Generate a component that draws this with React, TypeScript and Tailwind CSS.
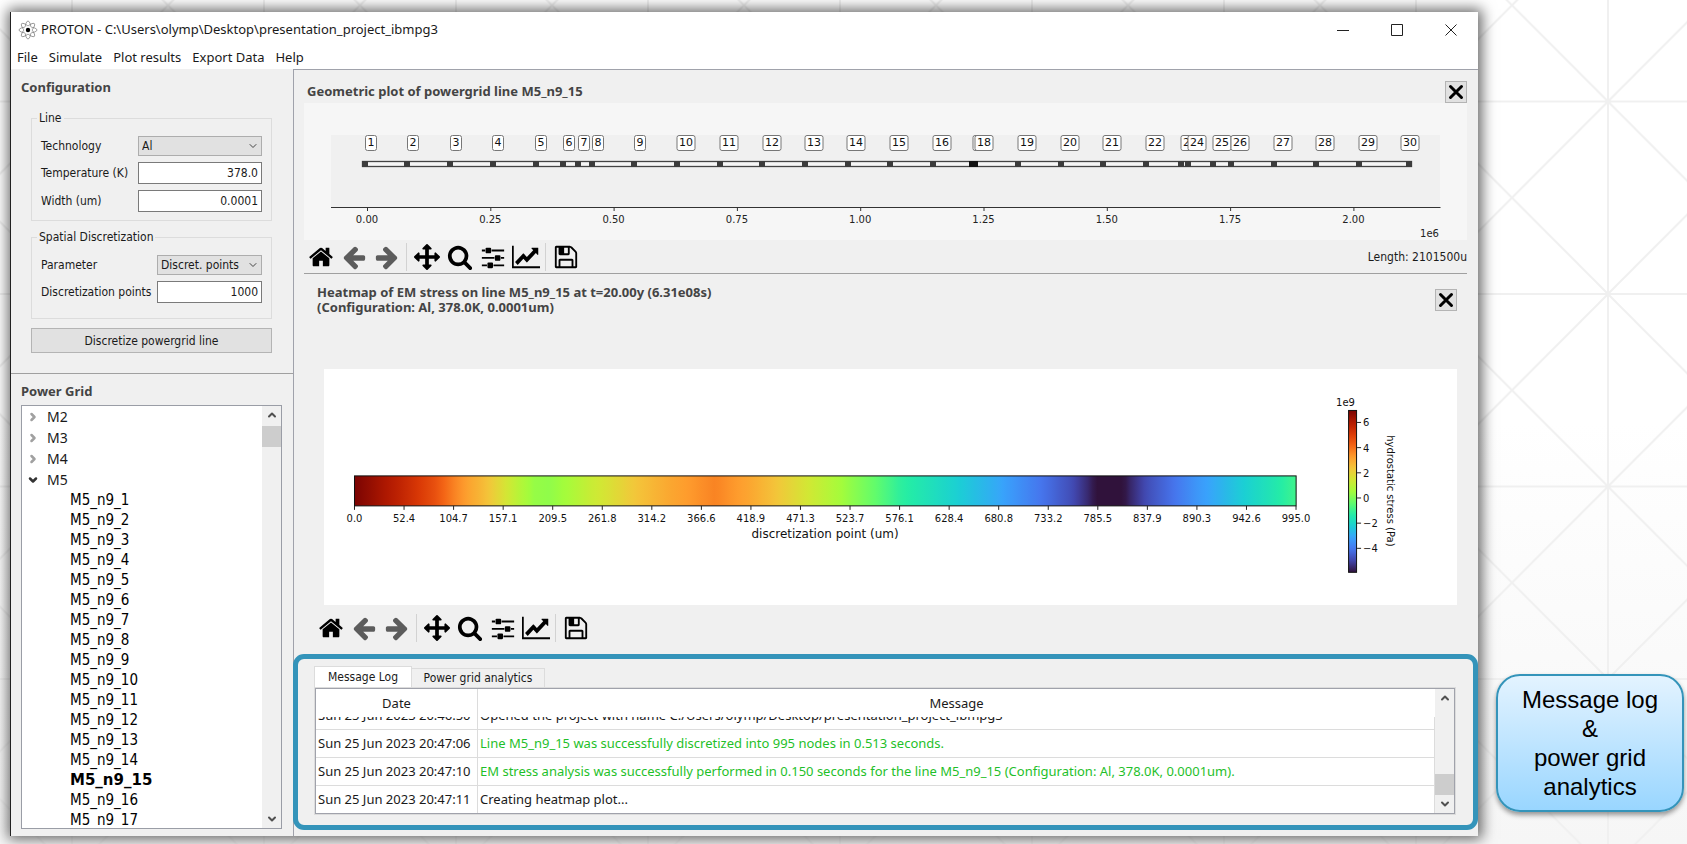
import React from "react";
import { ChevronDown, ChevronRight, ChevronUp } from "lucide-react";

const UI = "font-['Noto_Sans',sans-serif]";
const TAHOMA = "font-['DejaVu_Sans_Condensed','DejaVu_Sans',sans-serif]";
const HEADING = "font-['Noto_Sans',sans-serif] text-[13px] font-bold text-[#444]";

/* ---------- toolbar icons ---------- */

const ICONS = {
  home: "M1472 992v480q0 26-19 45t-45 19h-384v-384h-256v384h-384q-26 0-45-19t-19-45v-480q0-1 .5-3t.5-3l575-474 575 474q1 2 1 6zm223-69l-62 74q-8 9-21 11h-3q-13 0-21-7l-692-577-692 577q-12 8-24 7-13-2-21-11l-62-74q-8-10-7-23.5t11-21.5l719-599q32-26 76-26t76 26l244 204v-195q0-14 9-23t23-9h192q14 0 23 9t9 23v408l219 182q10 8 11 21.5t-7 23.5z",
  back: "M1664 896v128q0 53-32.5 90.500t-84.5 37.500h-704l293 294q38 36 38 90t-38 90l-75 76q-37 37-90 37-52 0-91-37l-651-652q-37-37-37-90 0-52 37-91l651-650q38-38 91-38 52 0 90 38l75 74q38 38 38 91t-38 91l-293 293h704q52 0 84.500 37.500t32.500 90.500z",
  pan: "M1792 896q0 26-19 45l-256 256q-19 19-45 19t-45-19-19-45v-128h-384v384h128q26 0 45 19t19 45-19 45l-256 256q-19 19-45 19t-45-19l-256-256q-19-19-19-45t19-45 45-19h128v-384h-384v128q0 26-19 45t-45 19-45-19l-256-256q-19-19-19-45t19-45l256-256q19-19 45-19t45 19 19 45v128h384v-384h-128q-26 0-45-19t-19-45 19-45l256-256q19-19 45-19t45 19l256 256q19 19 19 45t-19 45-45 19h-128v384h384v-128q0-26 19-45t45-19 45 19l256 256q19 19 19 45z",
  zoom: "M1216 832q0-185-131.500-316.500t-316.500-131.500-316.500 131.500-131.500 316.500 131.500 316.500 316.500 131.500 316.500-131.500 131.500-316.500zm512 832q0 52-38 90t-90 38q-54 0-90-38l-343-342q-179 124-399 124-143 0-273.500-55.500t-225-150-150-225-55.500-273.500 55.500-273.500 150-225 225-150 273.500-55.500 273.500 55.500 225 150 150 225 55.500 273.500q0 220-124 399l343 343q37 37 37 90z",
  sliders:
    "M352 1408v128h-352v-128h352zm352-128q26 0 45 19t19 45v256q0 26-19 45t-45 19h-256q-26 0-45-19t-19-45v-256q0-26 19-45t45-19h256zm160-384v128h-864v-128h864zm-640-512v128h-224v-128h224zm1312 1024v128h-736v-128h736zm-960-1152q26 0 45 19t19 45v256q0 26-19 45t-45 19h-256q-26 0-45-19t-19-45v-256q0-26 19-45t45-19h256zm640 512q26 0 45 19t19 45v256q0 26-19 45t-45 19h-256q-26 0-45-19t-19-45v-256q0-26 19-45t45-19h256zm320 128v128h-224v-128h224zm0-512v128h-864v-128h864z",
  chart:
    "M2048 1536v128h-2048v-1536h128v1408h1920zm-128-1248v435q0 21-19.500 29.500t-35.500-7.500l-121-121-633 633q-10 10-23 10t-23-10l-233-233-416 416-192-192 585-585q10-10 23-10t23 10l233 233 464-464-121-121q-16-16-7.500-35.500t29.500-19.500h435q14 0 23 9t9 23z",
  save: "M512 1536h768v-384h-768v384zm896 0h128v-896q0-14-10-38.500t-20-34.500l-281-281q-10-10-34-20t-39-10v416q0 40-28 68t-68 28h-576q-40 0-68-28t-28-68v-416h-128v1280h128v-416q0-40 28-68t68-28h832q40 0 68 28t28 68v416zm-384-928v-320q0-13-9.500-22.500t-22.500-9.500h-192q-13 0-22.500 9.500t-9.500 22.500v320q0 13 9.500 22.500t22.500 9.500h192q13 0 22.500-9.500t9.500-22.500zm640 32v928q0 40-28 68t-68 28h-1344q-40 0-68-28t-28-68v-1344q0-40 28-68t68-28h928q40 0 88 20t76 48l280 280q28 28 48 76t20 88z",
};

function ToolButton({
  label,
  path,
  viewBox = "0 0 1792 1792",
  className = "w-[26px] text-black",
}: {
  label: string;
  path: string;
  viewBox?: string;
  className?: string;
}) {
  return (
    <button type="button" aria-label={label} className="flex h-[33px] w-[33px] items-center justify-center">
      <svg viewBox={viewBox} preserveAspectRatio="none" className={`h-[26px] shrink-0 fill-current ${className}`}>
        <path d={path} />
      </svg>
    </button>
  );
}

function Separator() {
  return <div className="mx-[3px] h-7 w-px bg-[#d2d2d2]" />;
}

function PlotToolbar() {
  return (
    <div className="flex items-center">
      <ToolButton label="Home" path={ICONS.home} />
      <ToolButton label="Back" path={ICONS.back} className="w-[26px] text-[#5c5c5c]" />
      <ToolButton label="Forward" path={ICONS.back} className="w-[26px] -scale-x-100 text-[#5c5c5c]" />
      <Separator />
      <ToolButton label="Pan" path={ICONS.pan} />
      <ToolButton label="Zoom" path={ICONS.zoom} />
      <ToolButton label="Configure subplots" path={ICONS.sliders} viewBox="-128 0 1792 1792" />
      <ToolButton label="Edit axis" path={ICONS.chart} viewBox="0 0 2048 1792" className="w-7 text-black" />
      <Separator />
      <ToolButton label="Save" path={ICONS.save} />
    </div>
  );
}

function CloseButton({ label }: { label: string }) {
  return (
    <button
      type="button"
      aria-label={label}
      className="flex size-[22px] shrink-0 items-center justify-center border border-[#b4b4b4] bg-[#e1e1e1]"
    >
      <svg viewBox="0 0 16 16" className="size-4 stroke-black stroke-[3] [stroke-linecap:round]">
        <path d="M2.500 2.500 13.500 13.500M13.500 2.500 2.500 13.500" />
      </svg>
    </button>
  );
}

/* ---------- geometric plot ---------- */

const NODES = [
  [61, 67], [103, 109], [146, 152], [189, 194], [232, 237], [259, 265], [274, 280], [288, 294],
  [330, 336], [373, 382], [416, 425], [458, 468], [501, 510], [544, 552], [586, 595], [629, 638],
  [668, 678], [671, 680], [714, 723], [757, 766], [799, 808], [842, 851], [877, 886], [884, 893],
  [909, 918], [927, 936], [970, 979], [1012, 1021], [1055, 1064], [1105, 1106],
];
const GEO_TICKS = ["0.00", "0.25", "0.50", "0.75", "1.00", "1.25", "1.50", "1.75", "2.00"];

function GeometricPlot() {
  return (
    <svg
      viewBox="0 0 1163 137"
      role="img"
      aria-label="Geometric plot"
      className="block h-auto w-full bg-[#f6f6f6] font-['DejaVu_Sans',sans-serif] text-[10px]"
    >
      <rect x="27" y="32" width="1109" height="72" fill="#f0f0f0" />
      <path d="M27 104.500H1136.500" stroke="#333" strokeWidth="1" />
      <rect x="58.500" y="58.500" width="1049" height="5" fill="#f6f6f6" stroke="#444" strokeWidth="1.300" />
      {NODES.map(([x], i) => (
        <rect key={i} x={x - 3} y="58" width="6" height="6" fill={i === 16 || i === 17 ? "#111" : "#3c3c3c"} />
      ))}
      {NODES.map(([, c], i) => {
        const w = i < 9 ? 11 : 18;
        return (
          <g key={i}>
            <rect x={c - w / 2} y="32.500" width={w} height="15" rx="2" fill="#fff" stroke="#777" />
            <text x={c} y="43" textAnchor="middle" fill="#111" className="text-[11px]">
              {i + 1}
            </text>
          </g>
        );
      })}
      {GEO_TICKS.map((t, i) => (
        <g key={t}>
          <path d={`M${63.5 + i * 123.3} 104v4`} stroke="#333" />
          <text x={63 + i * 123.3} y="120" textAnchor="middle" fill="#222">
            {t}
          </text>
        </g>
      ))}
      <text x="1135" y="134" textAnchor="end" fill="#222">
        1e6
      </text>
    </svg>
  );
}

/* ---------- heatmap ---------- */

const TURBO = [
  [48, 18, 59], [65, 69, 171], [70, 117, 237], [57, 162, 252], [27, 207, 212], [36, 236, 166], [97, 252, 108],
  [164, 252, 59], [209, 232, 52], [243, 198, 58], [254, 155, 45], [243, 99, 21], [217, 56, 6], [177, 25, 1],
  [122, 4, 2],
];

function turbo(t: number) {
  const pos = t * (TURBO.length - 1);
  const i = Math.min(TURBO.length - 2, Math.floor(pos));
  const rgb = TURBO[i].map((c, k) => Math.round(c + (TURBO[i + 1][k] - c) * (pos - i)));
  return `rgb(${rgb.join(",")})`;
}

const STRESS: [number, number][] = [
  [0, 1], [52, 0.895], [84, 0.82], [104, 0.75], [121, 0.7], [137, 0.66], [154, 0.6], [172, 0.535],
  [189, 0.485], [206, 0.478], [225, 0.505], [249, 0.555], [270, 0.59], [298, 0.645], [330, 0.69], [381, 0.745],
  [418, 0.695], [443, 0.65], [471, 0.59], [500, 0.53], [524, 0.48], [550, 0.43], [576, 0.37], [628, 0.3],
  [680, 0.225], [705, 0.18], [733, 0.13], [757, 0.085], [776, 0.03], [783, 0], [813, 0], [820, 0.03],
  [838, 0.085], [865, 0.14], [890, 0.195], [915, 0.24], [942, 0.29], [970, 0.34], [995, 0.39],
];
const HEAT_TICKS = [
  "0.0", "52.4", "104.7", "157.1", "209.5", "261.8", "314.2", "366.6", "418.9", "471.3",
  "523.7", "576.1", "628.4", "680.8", "733.2", "785.5", "837.9", "890.3", "942.6", "995.0",
];
const BAR_TICKS = ["6", "4", "2", "0", "−2", "−4"];

function stressAt(x: number) {
  for (let i = 1; i < STRESS.length; i++) {
    const [x1, t1] = STRESS[i];
    if (x <= x1) {
      const [x0, t0] = STRESS[i - 1];
      return t0 + ((t1 - t0) * (x - x0)) / (x1 - x0);
    }
  }
  return STRESS[STRESS.length - 1][1];
}

function HeatmapPlot() {
  const heat = Array.from({ length: 200 }, (_, i) => i / 199);
  const scale = Array.from({ length: 41 }, (_, i) => i / 40);
  return (
    <svg
      viewBox="0 0 1134 236"
      role="img"
      aria-label="Heatmap of EM stress"
      className="block h-auto w-full bg-white font-['DejaVu_Sans',sans-serif] text-[10px]"
    >
      <defs>
        <linearGradient id="heat">
          {heat.map((p) => (
            <stop key={p} offset={p} stopColor={turbo(stressAt(p * 995))} />
          ))}
        </linearGradient>
        <linearGradient id="scale" x1="0" y1="1" x2="0" y2="0">
          {scale.map((p) => (
            <stop key={p} offset={p} stopColor={turbo(p)} />
          ))}
        </linearGradient>
      </defs>
      <rect x="30.500" y="107" width="942.500" height="30" fill="url(#heat)" stroke="#111" />
      {HEAT_TICKS.map((t, i) => (
        <g key={t}>
          <path d={`M${30.5 + i * 49.6} 137v4`} stroke="#222" />
          <text x={30.5 + i * 49.6} y="153.500" textAnchor="middle" fill="#111">
            {t}
          </text>
        </g>
      ))}
      <text x="501.500" y="169" textAnchor="middle" fill="#111" className="text-[12px]">
        discretization point (um)
      </text>
      <rect x="1025.500" y="41.500" width="8" height="162" fill="url(#scale)" stroke="#111" />
      <text x="1013" y="37.500" fill="#111">
        1e9
      </text>
      {BAR_TICKS.map((t, i) => (
        <g key={t}>
          <path d={`M1034 ${53.5 + i * 25.2}h4`} stroke="#222" />
          <text x="1040" y={57.5 + i * 25.2} fill="#111">
            {t}
          </text>
        </g>
      ))}
      <text transform="translate(1064 122) rotate(90)" textAnchor="middle" fill="#111">
        hydrostatic stress (Pa)
      </text>
    </svg>
  );
}

/* ---------- left side ---------- */

function Combo({ id, value, width }: { id: string; value: string; width: string }) {
  return (
    <div className={`relative ${width}`}>
      <select
        id={id}
        defaultValue={value}
        className="block h-5 w-full appearance-none border border-[#adadad] bg-[#e1e1e1] pl-[3px] leading-[18px] text-[#1a1a1a]"
      >
        <option>{value}</option>
      </select>
      <ChevronDown className="pointer-events-none absolute top-1 right-[3px] size-3 text-[#444]" strokeWidth={2} />
    </div>
  );
}

function Field({ id, label, children }: { id: string; label: string; children: React.ReactNode }) {
  return (
    <div className="flex items-center justify-between">
      <label htmlFor={id} className="whitespace-nowrap">
        {label}
      </label>
      {children}
    </div>
  );
}

const inputClass = "block h-[22px] border border-[#7a7a7a] bg-white pr-[3px] text-right text-[#1a1a1a]";

function Configuration() {
  return (
    <section
      className={`border-b border-[#a0a0a0] pt-[9px] pr-[11px] pb-5 pl-[10px] text-[12px] text-[#1a1a1a] ${TAHOMA}`}
    >
      <h2 className={`leading-[18px] ${HEADING}`}>Configuration</h2>
      <div className="px-[10px] pt-[13px]">
        <fieldset className="border border-[#dcdcdc] px-[9px] pb-2">
          <legend className="-ml-1 px-[2px] leading-[18px]">Line</legend>
          <div className="flex flex-col gap-[6px] pt-[9px]">
            <Field id="tech" label="Technology">
              <Combo id="tech" value="Al" width="w-[124px]" />
            </Field>
            <Field id="temp" label="Temperature (K)">
              <input id="temp" defaultValue="378.0" className={`w-[124px] ${inputClass}`} />
            </Field>
            <Field id="width" label="Width (um)">
              <input id="width" defaultValue="0.0001" className={`w-[124px] ${inputClass}`} />
            </Field>
          </div>
        </fieldset>
        <fieldset className="mt-[7px] border border-[#dcdcdc] px-[9px] pb-[15px]">
          <legend className="-ml-1 px-[2px] leading-[18px]">Spatial Discretization</legend>
          <div className="flex flex-col gap-[6px] pt-[9px]">
            <Field id="param" label="Parameter">
              <Combo id="param" value="Discret. points" width="w-[105px]" />
            </Field>
            <Field id="points" label="Discretization points">
              <input id="points" defaultValue="1000" className={`w-[105px] ${inputClass}`} />
            </Field>
          </div>
        </fieldset>
        <button type="button" className="mt-[9px] block h-[25px] w-full border border-[#b4b4b4] bg-[#e1e1e1]">
          Discretize powergrid line
        </button>
      </div>
    </section>
  );
}

function ScrollBar({ thumb }: { thumb: string }) {
  return (
    <div className="flex w-[19px] shrink-0 flex-col items-center bg-[#f0f0f0]">
      <ChevronUp className="my-[3px] size-3 shrink-0 text-[#505050]" strokeWidth={4} />
      <div className={`flex w-full flex-1 flex-col ${thumb}`}>
        <div className="h-[21px] bg-[#cdcdcd]" />
      </div>
      <ChevronDown className="my-[3px] size-3 shrink-0 text-[#505050]" strokeWidth={4} />
    </div>
  );
}

const LAYERS = ["M2", "M3", "M4", "M5"];
const LINES = Array.from({ length: 17 }, (_, i) => i + 1);

function PowerGrid() {
  return (
    <section className="pt-2 pr-[11px] pb-[7px] pl-[10px]">
      <h2 className={`leading-[18px] ${HEADING}`}>Power Grid</h2>
      <div className="mt-[5px] flex h-[424px] overflow-hidden border border-[#9a9da6] bg-white">
        <ul className="min-w-0 flex-1 text-[#1a1a1a]">
          {LAYERS.map((name) => (
            <li key={name}>
              <div className={`flex h-[21px] items-center text-[14px] ${UI}`}>
                {name === "M5" ? (
                  <ChevronDown className="mr-2 ml-[5px] size-3 text-[#333]" strokeWidth={5} />
                ) : (
                  <ChevronRight className="mr-2 ml-[5px] size-3 text-[#a0a0a0]" strokeWidth={5} />
                )}
                {name}
              </div>
              {name === "M5" && (
                <ul className={`pl-12 text-[15px] leading-5 text-black ${TAHOMA}`}>
                  {LINES.map((n) => (
                    <li key={n} className={n === 15 ? "font-['DejaVu_Sans',sans-serif] font-bold" : ""}>
                      M5_n9_{n}
                    </li>
                  ))}
                </ul>
              )}
            </li>
          ))}
        </ul>
        <ScrollBar thumb="pt-0.5" />
      </div>
    </section>
  );
}

/* ---------- message log ---------- */

const MESSAGES = [
  ["Sun 25 Jun 2023 20:46:50", "Opened the project with name C:/Users/olymp/Desktop/presentation_project_ibmpg3", ""],
  ["Sun 25 Jun 2023 20:47:06", "Line M5_n9_15 was successfully discretized into 995 nodes in 0.513 seconds.", "ok"],
  [
    "Sun 25 Jun 2023 20:47:10",
    "EM stress analysis was successfully performed in 0.150 seconds for the line M5_n9_15 (Configuration: Al, 378.0K, 0.0001um).",
    "ok",
  ],
  ["Sun 25 Jun 2023 20:47:11", "Creating heatmap plot...", ""],
];

function MessageLog() {
  return (
    <section className="-ml-px rounded-[11px] border-5 border-[#3494ba] pt-[7px] pr-[17px] pb-[10px] pl-4">
      <div role="tablist" className={`flex items-end text-[12px] text-[#1a1a1a] ${TAHOMA}`}>
        <button
          type="button"
          role="tab"
          aria-selected="true"
          className="h-[21px] w-[98px] border border-b-0 border-[#dcdcdc] bg-white whitespace-nowrap"
        >
          Message Log
        </button>
        <button
          type="button"
          role="tab"
          aria-selected="false"
          className="h-[19px] w-[133px] border border-b-0 border-l-0 border-[#dcdcdc] whitespace-nowrap"
        >
          Power grid analytics
        </button>
      </div>
      <div className="border border-[#dcdcdc] bg-white">
        <div className="flex h-[126px] border border-[#a0a2ab]">
          <div className="min-w-0 flex-1 overflow-hidden">
            <table
              className={`-mt-[15px] w-full table-fixed border-separate border-spacing-0 text-[13px] whitespace-nowrap text-[#1a1a1a] ${UI}`}
            >
              <thead className="sticky top-0">
                <tr className="h-7">
                  <th className="w-[162px] border-r border-[#dcdcdc] bg-white p-0 pt-[2px] font-normal">Date</th>
                  <th className="bg-white p-0 pt-[2px] font-normal">Message</th>
                </tr>
              </thead>
              <tbody>
                {MESSAGES.map(([date, text, kind]) => (
                  <tr key={date} className="h-7">
                    <td className="border-r border-b border-[#dcdcdc] p-0 pl-[2px]">{date}</td>
                    <td
                      className={`border-r border-b border-[#dcdcdc] p-0 pl-[2px] ${kind === "ok" ? "text-[#1fbf2a]" : ""}`}
                    >
                      {text}
                    </td>
                  </tr>
                ))}
              </tbody>
            </table>
          </div>
          <ScrollBar thumb="justify-end" />
        </div>
      </div>
    </section>
  );
}

/* ---------- window ---------- */

function AtomIcon() {
  return (
    <svg viewBox="0 0 20 20" className="size-5 fill-none stroke-[#777]" strokeWidth="0.7">
      {[0, 45, 90, 135].map((a) => (
        <ellipse key={a} cx="10" cy="10" rx="9" ry="3" transform={`rotate(${a} 10 10)`} />
      ))}
      <circle cx="10" cy="10" r="4" className="fill-white stroke-none" />
      <circle cx="10" cy="10" r="2.200" className="fill-black stroke-none" />
    </svg>
  );
}

function TitleBar() {
  const control = "flex h-[35px] w-[54px] items-center justify-center";
  return (
    <header className={`bg-white text-[13px] text-[#1a1a1a] ${UI}`}>
      <div className="flex items-center pl-[7px]">
        <AtomIcon />
        <h1 className="ml-[3px] flex-1">PROTON - C:\Users\olymp\Desktop\presentation_project_ibmpg3</h1>
        <button type="button" aria-label="Minimize" className={control}>
          <svg viewBox="0 0 12 12" className="size-3 stroke-[#222]">
            <path d="M0 6.500H12" />
          </svg>
        </button>
        <button type="button" aria-label="Maximize" className={control}>
          <svg viewBox="0 0 12 12" className="size-3 fill-none stroke-[#222]">
            <path d="M.5 .5H11.500V11.500H.5z" />
          </svg>
        </button>
        <button type="button" aria-label="Close" className={control}>
          <svg viewBox="0 0 12 12" className="size-3 stroke-[#222]">
            <path d="M.5 .5 11.500 11.500M11.500 .5 .5 11.500" />
          </svg>
        </button>
      </div>
      <nav className="flex h-[22px] items-center gap-[11px] pl-[6px]">
        {["File", "Simulate", "Plot results", "Export Data", "Help"].map((m) => (
          <button key={m} type="button">
            {m}
          </button>
        ))}
      </nav>
    </header>
  );
}

function Backdrop() {
  return (
    <svg aria-hidden="true" className="absolute inset-0 size-full">
      <defs>
        <pattern id="grid" x="72" y="-91" width="192" height="192.500" patternUnits="userSpaceOnUse">
          <path
            d="M0 0H192M0 192.500H192M0 0V192.500M192 0V192.500M0 0 192 192.500M192 0 0 192.500"
            fill="none"
            stroke="#f0f0f0"
            strokeWidth="2"
          />
        </pattern>
      </defs>
      <rect width="100%" height="100%" fill="url(#grid)" />
    </svg>
  );
}

export default function App() {
  return (
    <div className="relative flex min-h-screen overflow-hidden bg-linear-to-b from-white from-50% to-[#f6f6f6] pt-3 pb-2 pl-[10px]">
      <Backdrop />
      <div className="relative flex min-w-0 flex-1 flex-col border-l border-[#222] bg-[#f0f0f0] shadow-[1px_0_13px_3px_rgba(0,0,0,0.6)]">
        <TitleBar />
        <div className="flex flex-1">
          <div className="w-[282px] shrink-0">
            <Configuration />
            <PowerGrid />
          </div>
          <main className="flex min-w-0 flex-1 flex-col border-t border-l border-[#a0a2ab] pb-[6px]">
            <section className="mr-[11px] ml-[10px] border-b border-[#a0a0a0] pt-[11px]">
              <div className="flex items-center justify-between pl-[3px]">
                <h2 className={HEADING}>Geometric plot of powergrid line M5_n9_15</h2>
                <CloseButton label="Close geometric plot" />
              </div>
              <GeometricPlot />
              <div className={`flex items-center justify-between text-[12px] text-[#1a1a1a] ${TAHOMA}`}>
                <PlotToolbar />
                <span>Length: 2101500u</span>
              </div>
            </section>
            <section className="flex flex-1 flex-col pr-[21px] pl-5">
              <div className="flex h-[95px] items-start justify-between pt-[11px]">
                <h2 className={`pl-[3px] leading-[15px] ${HEADING}`}>
                  Heatmap of EM stress on line M5_n9_15 at t=20.00y (6.31e08s)
                  <br />
                  (Configuration: Al, 378.0K, 0.0001um)
                </h2>
                <div className="pt-1">
                  <CloseButton label="Close heatmap" />
                </div>
              </div>
              <div className="pl-[10px]">
                <HeatmapPlot />
              </div>
              <div className="pt-[7px] pb-1">
                <PlotToolbar />
              </div>
            </section>
            <MessageLog />
          </main>
        </div>
      </div>
      <aside className="relative flex w-[209px] shrink-0 items-end pr-[3px] pb-6 pl-[18px]">
        <p className="w-full rounded-[24px] border-2 border-[#3494ba] bg-linear-to-b from-[#e3f3ff] to-[#99d6ff] py-[9px] text-center font-['Liberation_Sans',sans-serif] text-[24px] leading-[29px] text-black shadow-[0_3px_5px_rgba(0,0,0,0.4)]">
          Message log
          <br />
          &amp;
          <br />
          power grid
          <br />
          analytics
        </p>
      </aside>
    </div>
  );
}
